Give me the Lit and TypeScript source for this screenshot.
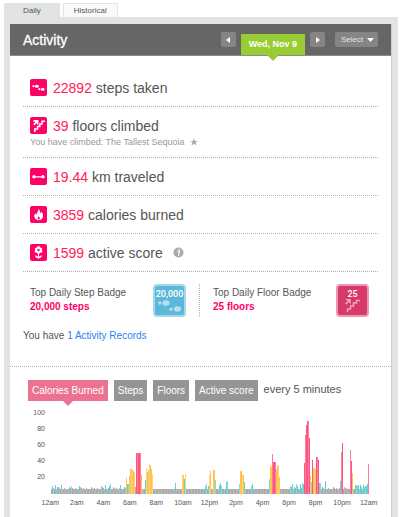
import { LitElement, html, svg, css } from "lit";
import { customElement, state } from "lit/decorators.js";
import { classMap } from "lit/directives/class-map.js";

const PLOT_START = 50;
const PLOT_WIDTH = 320;
const PLOT_HEIGHT = 89;

type Level = "idle" | "light" | "fair" | "very";
type Bar = [x: number, height: number, level: Level];

const LIGHT: [number, number][] = [
  [52, 8], [55, 9], [57, 7], [61, 9], [71, 8], [79, 8], [101, 8], [105, 9], [109, 8], [110, 10], [120, 9],
  [127, 10], [128, 10], [145, 14], [175, 11], [184, 15], [205, 8], [206, 10], [208, 8], [215, 14],
  [219, 9], [220, 11], [221, 8], [226, 12], [227, 13], [239, 10], [244, 12], [251, 8], [252, 10],
  [269, 15], [290, 8], [291, 7], [292, 10], [294, 7], [296, 10], [297, 8], [300, 10], [302, 11], [303, 10],
  [311, 12], [319, 11], [320, 11], [325, 13], [340, 13], [355, 9], [356, 9], [357, 8], [358, 9],
  [360, 9], [361, 7], [363, 9], [364, 7], [365, 8], [366, 8], [367, 10],
];
const FAIR: [number, number][] = [
  [126, 16], [129, 18], [130, 25], [131, 25], [132, 25], [133, 23], [134, 22], [141, 19], [146, 26],
  [147, 22], [148, 24], [149, 30], [150, 29], [151, 25], [152, 20], [182, 19], [183, 19], [185, 20],
  [209, 19], [210, 23], [213, 24], [214, 24], [240, 23], [241, 23], [242, 19], [243, 19], [270, 28],
  [271, 27], [276, 25], [277, 28], [278, 29], [279, 17], [310, 18], [313, 26], [314, 26], [315, 25], [352, 21],
];
const VERY: [number, number][] = [
  [136, 41], [137, 41], [138, 41], [139, 41], [140, 41], [272, 40], [273, 32], [274, 32], [275, 32],
  [304, 31], [305, 59], [306, 69], [307, 73], [308, 73], [309, 56], [312, 34], [316, 37], [317, 37],
  [318, 34], [341, 42], [342, 51], [350, 44], [351, 33], [368, 30],
];
const IDLE_PATTERN = [6, 5, 7, 5, 5, 6, 5, 5, 5, 6, 5];

function buildBars(): Bar[] {
  const bars: Bar[] = [];
  for (let i = 1; i < PLOT_WIDTH - 1; i++) {
    const calm = i > 104 && i < 240;
    bars.push([i, calm ? 5 : IDLE_PATTERN[(i * 3) % IDLE_PATTERN.length], "idle"]);
  }
  const add = (list: [number, number][], level: Level) =>
    list.forEach(([x, h]) => {
      bars[x - PLOT_START - 1] = [x - PLOT_START, h, level];
    });
  add(LIGHT, "light");
  add(FAIR, "fair");
  add(VERY, "very");
  return bars;
}

const ICONS: Record<string, unknown> = {
  steps: svg`<ellipse cx="6.800" cy="7.200" rx="2" ry="1.500"/><circle cx="3.500" cy="7.200" r="1.100"/>
    <ellipse cx="12.700" cy="10.300" rx="1.800" ry="1.500"/><circle cx="9.300" cy="10.200" r="1.100"/>`,
  floors: svg`<path d="M4.800 15V12H7.500V9.500H9.800V7H12V4.300H15" fill="none" stroke="currentColor" stroke-width="1.500"/>
    <path d="M3.500 3H8.500V7.500H7V5.800L4.500 8.300L3.300 7.200L5.700 4.700H3.500Z" fill="currentColor"/>`,
  distance: svg`<circle cx="4" cy="8.800" r="1.700"/><circle cx="13" cy="8.800" r="1.700"/><path d="M4 8.200H13V9.400H4Z"/>`,
  calories: svg`<path d="M8.300 2.800C10.500 4.500 9.600 6.300 10.700 7.300C11.300 6.900 11.400 6.200 11.200 5.500C13 7 13.500 9.300 12.700 11.300C12 13.200 10.600 14.200 8.600 14.200C6.200 14.200 4.300 12.600 4.300 10.300C4.300 8.900 4.800 8 5.500 7.300C5.700 8.100 6 8.500 6.600 8.700C6.800 6.300 8.800 5.600 8.300 2.800Z"/>
    <path class="hole" d="M8.700 10.300C9.700 11.300 10 12 9.700 12.900C9.400 13.600 8 13.600 7.700 12.800C7.300 12 8.400 11.500 8.700 10.300Z"/>`,
  score: svg`<circle cx="8.500" cy="3.600" r="1.500"/><circle cx="10.700" cy="4.900" r="1.500"/><circle cx="10.700" cy="7.200" r="1.500"/>
    <circle cx="8.500" cy="8.400" r="1.500"/><circle cx="6.300" cy="7.200" r="1.500"/><circle cx="6.300" cy="4.900" r="1.500"/>
    <circle cx="8.500" cy="6" r="2"/><circle class="hole" cx="8.500" cy="6" r="1.200"/>
    <path d="M8 9H9V14.500H8Z"/><path d="M8.500 14.200C6.500 14.300 5.300 13.200 5 11.500C7 11.300 8.200 12.300 8.500 14.200ZM8.500 14.200C10.500 14.300 11.700 13.200 12 11.500C10 11.300 8.800 12.300 8.500 14.200Z"/>`,
};

const STATS = [
  { icon: "steps", value: "22892", label: "steps taken" },
  { icon: "floors", value: "39", label: "floors climbed", note: "You have climbed: The Tallest Sequoia" },
  { icon: "distance", value: "19.44", label: "km traveled" },
  { icon: "calories", value: "3859", label: "calories burned" },
  { icon: "score", value: "1599", label: "active score", info: true },
];

@customElement("activity-chart")
export class ActivityChart extends LitElement {
  private bars = buildBars();

  static styles = css`
    :host { display: block; color: #555; font-size: 7px; }
    .body { display: flex; padding: 0 21px 0 18px; }
    .scale { display: flex; flex-direction: column; width: 17px; margin-right: 5px; text-align: right; line-height: 16px; }
    .plot { display: block; flex: 1; min-width: 0; height: 89px; }
    .hours { display: flex; padding: 1px 9px 0 27px; line-height: 16px; }
    .hour { flex: 1; width: 0; text-align: center; white-space: nowrap; }
    .idle { fill: #acacac; }
    .light { fill: #66d0d0; }
    .fair { fill: #ffc34f; }
    .very { fill: #ff5580; }
    .idle.alt { fill: #bbb; }
    .light.alt { fill: #84dada; }
    .fair.alt { fill: #ffd27a; }
    .very.alt { fill: #ff7c9d; }
  `;

  render() {
    return html`
      <div class="body">
        <div class="scale">${[100, 80, 60, 40, 20].map((n) => html`<span>${n}</span>`)}</div>
        <svg class="plot" viewBox="0 0 ${PLOT_WIDTH} ${PLOT_HEIGHT}" preserveAspectRatio="none" role="img" aria-label="Calories burned every 5 minutes">
          ${this.bars.map(
            ([x, h, level]) =>
              svg`<rect class="${level} ${x % 3 === 0 ? "alt" : ""}" x=${x} y=${PLOT_HEIGHT - h} width="1" height=${h} />`
          )}
        </svg>
      </div>
      <div class="hours">
        ${["12am", "2am", "4am", "6am", "8am", "10am", "12pm", "2pm", "4pm", "6pm", "8pm", "10pm", "12am"].map(
          (t) => html`<span class="hour">${t}</span>`
        )}
      </div>
    `;
  }
}

@customElement("app-root")
export class AppRoot extends LitElement {
  @state() private metric = "Calories Burned";

  static styles = css`
    :host { display: flex; flex-direction: column; box-sizing: border-box; min-height: 100vh; padding: 3px 2px 0 4px; background: #fff; color: #555; font-family: "Liberation Sans", Arial, sans-serif; font-size: 10px; line-height: 14px; }
    button, select { margin: 0; border: 0; padding: 0; font: inherit; color: inherit; cursor: pointer; }
    .tabs { display: flex; gap: 3px; }
    .tab { height: 14px; padding: 0 10px; background: #fafafa; border: 1px solid #e1e4e3; border-bottom: 0; font-size: 8px; line-height: 12px; }
    .tab.current { background: #e1e4e3; padding: 0 18px; }
    .frame { flex: 1; display: flex; flex-direction: column; padding: 7px 6px 0; background: #e1e4e3; }
    .panel { flex: 1; background: #fff; border-right: 1px solid #cfd2d1; }
    .head { display: flex; align-items: center; height: 32px; box-sizing: border-box; padding: 0 13px; background: #666; border-bottom: 1px solid #8a8a8a; color: #fff; }
    .title { flex: 1; margin: 0; font-size: 14px; font-weight: 400; -webkit-text-stroke: 0.3px; }
    .step { display: flex; align-items: center; justify-content: center; width: 15px; height: 15px; border-radius: 2px; background: #858585; color: #fff; }
    .date { position: relative; align-self: flex-end; height: 21px; margin: 0 5px; padding: 0 8px; background: #9c3; font-size: 9px; font-weight: 700; line-height: 21px; }
    .date::after, .chip.current::after { content: ""; position: absolute; top: 100%; left: 50%; margin-left: -6px; border: 6px solid transparent; border-bottom: 0; border-top-color: #9c3; }
    .picker { display: grid; align-items: center; width: 43px; margin-left: 10px; border-radius: 2px; background: #858585; color: #e4e4e4; }
    .choice { grid-area: 1 / 1; appearance: none; height: 15px; padding: 0 6px; background: none; font-size: 8px; }
    .caret { grid-area: 1 / 1; justify-self: end; margin-right: 4px; pointer-events: none; }
    .content { padding: 13px 13px 0; }
    .stat { padding: 9px 7px; border-bottom: 1px dotted #b0b0b0; }
    .line { display: flex; align-items: center; height: 19px; gap: 6px; font-size: 14px; white-space: nowrap; }
    .icon { width: 17px; height: 17px; border-radius: 2px; background: #ff0066; color: #fff; fill: #fff; }
    .hole { fill: #ff0066; }
    .value { color: #ff2255; }
    .note { display: flex; align-items: center; gap: 6px; height: 13px; margin: 0; color: #999; font-size: 9px; }
    .info { margin-left: 4px; }
    .badges { display: flex; margin-top: 12px; }
    .badge { display: flex; flex: 1; justify-content: space-between; padding: 0 9px 0 13px; }
    .badge:first-child { flex: 0 0 156px; padding: 0 13px 0 7px; border-right: 1px dotted #b0b0b0; }
    .badge-text { margin: 0; padding-top: 2px; }
    .badge-value { display: block; color: #ff0066; font-weight: 700; }
    .badge-art { width: 33px; height: 33px; }
    .badge-num { fill: #fff; font-family: Roboto, sans-serif; font-weight: 500; font-size: 9px; text-anchor: middle; }
    .records { margin: 12px 0 0; }
    .link { color: #2a85f0; text-decoration: none; }
    .chart { margin-top: 23px; border-top: 1px dotted #b0b0b0; }
    .chips { display: flex; gap: 6px; padding: 13px 18px 4px; }
    .chip { position: relative; height: 21px; padding: 0 4px; background: #959595; color: #fff; font-size: 10px; line-height: 21px; white-space: nowrap; }
    .chip.current { background: #ec7292; }
    .chip.current::after { margin-left: -5px; border-width: 5px; border-bottom: 0; border-top-color: #ec7292; }
    .every { padding-top: 2px; font-size: 11px; white-space: nowrap; }
  `;

  private renderStat(s: (typeof STATS)[number]) {
    return html`<div class="stat">
      <div class="line">
        <svg class="icon" viewBox="0 0 17 17" aria-hidden="true">${ICONS[s.icon]}</svg>
        <span><span class="value">${s.value}</span> ${s.label}</span>
        ${s.info
          ? html`<svg class="info" width="11" height="11" viewBox="0 0 11 11" aria-label="Info"><circle cx="5.500" cy="5.500" r="5" fill="#aaa"/><circle cx="6.200" cy="2.800" r="0.900" fill="#fff"/><path d="M4.300 4.500H6.400L5.600 8.200H6.300" fill="none" stroke="#fff" stroke-width="1.100"/></svg>`
          : ""}
      </div>
      ${s.note
        ? html`<p class="note">${s.note}<svg width="8" height="8" viewBox="0 0 8 8" aria-hidden="true"><path fill="#aaa" d="M4 0.300L5 2.900H7.800L5.600 4.600L6.400 7.400L4 5.700L1.600 7.400L2.400 4.600L0.200 2.900H3Z"/></svg></p>`
        : ""}
    </div>`;
  }

  render() {
    return html`
      <nav class="tabs">
        <button class="tab current">Daily</button>
        <button class="tab">Historical</button>
      </nav>
      <div class="frame">
        <main class="panel">
          <header class="head">
            <h1 class="title">Activity</h1>
            <button class="step" aria-label="Previous day"><svg width="4" height="6" viewBox="0 0 4 6"><path fill="#fff" d="M4 0V6L0 3Z"/></svg></button>
            <button class="date">Wed, Nov 9</button>
            <button class="step" aria-label="Next day"><svg width="4" height="6" viewBox="0 0 4 6"><path fill="#fff" d="M0 0V6L4 3Z"/></svg></button>
            <div class="picker">
              <select class="choice" aria-label="Select period"><option>Select</option></select>
              <svg class="caret" width="7" height="4" viewBox="0 0 7 4"><path fill="#fff" d="M0 0H7L3.500 4Z"/></svg>
            </div>
          </header>
          <section class="content">
            ${STATS.map((s) => this.renderStat(s))}
            <div class="badges">
              <div class="badge">
                <p class="badge-text">Top Daily Step Badge<span class="badge-value">20,000 steps</span></p>
                <svg class="badge-art" viewBox="0 0 33 33">
                  <rect x="1" y="1" width="31" height="31" rx="3" fill="#5bb8da" stroke="#a5d9ea" stroke-width="2"/>
                  <text class="badge-num" x="16.500" y="13">20,000</text>
                  <g fill="#b3e0ef"><circle cx="6.800" cy="19" r="1.700"/><ellipse cx="13" cy="19" rx="3.700" ry="2.700"/><circle cx="18" cy="25.200" r="1.700"/><ellipse cx="24.500" cy="25" rx="3.700" ry="2.700"/></g>
                </svg>
              </div>
              <div class="badge">
                <p class="badge-text">Top Daily Floor Badge<span class="badge-value">25 floors</span></p>
                <svg class="badge-art" viewBox="0 0 33 33">
                  <rect x="1" y="1" width="31" height="31" rx="3" fill="#d63a6a" stroke="#ef97b2" stroke-width="2"/>
                  <text class="badge-num" x="16.500" y="13">25</text>
                  <g fill="none" stroke="#f2a6bd" stroke-width="1.500"><path d="M11.500 28V25H14.500V22H17.500V19H20.500V16.500H24"/><path d="M10 15.800H14V19.500M14 15.800L9.500 20.300"/></g>
                </svg>
              </div>
            </div>
            <p class="records">You have <a class="link" href="#records">1 Activity Records</a></p>
          </section>
          <section class="chart">
            <div class="chips">
              ${["Calories Burned", "Steps", "Floors", "Active score"].map(
                (m) => html`<button class=${classMap({ chip: true, current: m === this.metric })} @click=${() => (this.metric = m)}>${m}</button>`
              )}
              <span class="every">every 5 minutes</span>
            </div>
            <activity-chart></activity-chart>
          </section>
        </main>
      </div>
    `;
  }
}
